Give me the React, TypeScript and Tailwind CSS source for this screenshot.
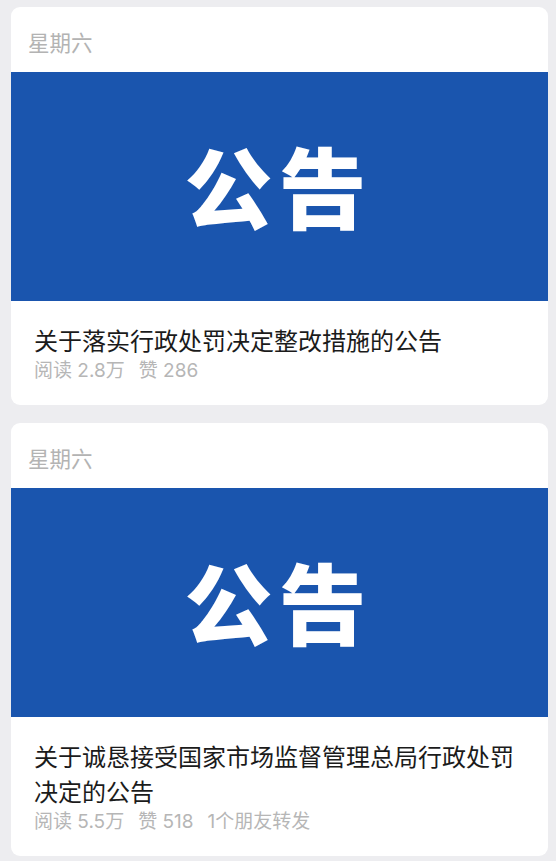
import React from 'react';

interface Article {
  date: string;
  title: string;
  meta: string[];
}

const articles: Article[] = [
  {
    date: '星期六',
    title: '关于落实行政处罚决定整改措施的公告',
    meta: ['阅读 2.8万', '赞 286'],
  },
  {
    date: '星期六',
    title: '关于诚恳接受国家市场监督管理总局行政处罚决定的公告',
    meta: ['阅读 5.5万', '赞 518', '1个朋友转发'],
  },
];

const Banner: React.FC = () => (
  <div className="h-[229px] bg-[#1a55ae] flex items-center justify-center">
    <span className="text-white text-[88px] leading-none font-black tracking-[6px] pl-[6px] -mt-[6px] -ml-[8px]">
      公告
    </span>
  </div>
);

const ArticleCard: React.FC<{ article: Article }> = ({ article }) => (
  <div className="bg-white rounded-[9px] overflow-hidden">
    <div className="pl-[17px] pt-[22px] pb-[17px] text-[21.5px] leading-[26px] text-[#b3b3b3]">
      {article.date}
    </div>
    <Banner />
    <div className="pl-[23px] pr-[20px] pt-[21px] pb-[21px]">
      <div className="text-[24px] leading-[35px] text-[#1b1b1b]">{article.title}</div>
      <div
        className="flex gap-[14px] text-[19px] leading-[27px] text-[#b6b6b6]"
        style={{ fontFamily: 'Inter, "Noto Sans CJK SC", sans-serif' }}
      >
        {article.meta.map((m) => (
          <span key={m}>{m}</span>
        ))}
      </div>
    </div>
  </div>
);

export default function App() {
  return (
    <div
      className="min-h-screen bg-[#ededf0] pt-[7px] pb-[6px] pl-[11px] pr-[8px] flex flex-col gap-[18px]"
      style={{ fontFamily: '"Noto Sans CJK SC", "Noto Sans", sans-serif' }}
    >
      {articles.map((a, i) => (
        <ArticleCard key={i} article={a} />
      ))}
    </div>
  );
}
